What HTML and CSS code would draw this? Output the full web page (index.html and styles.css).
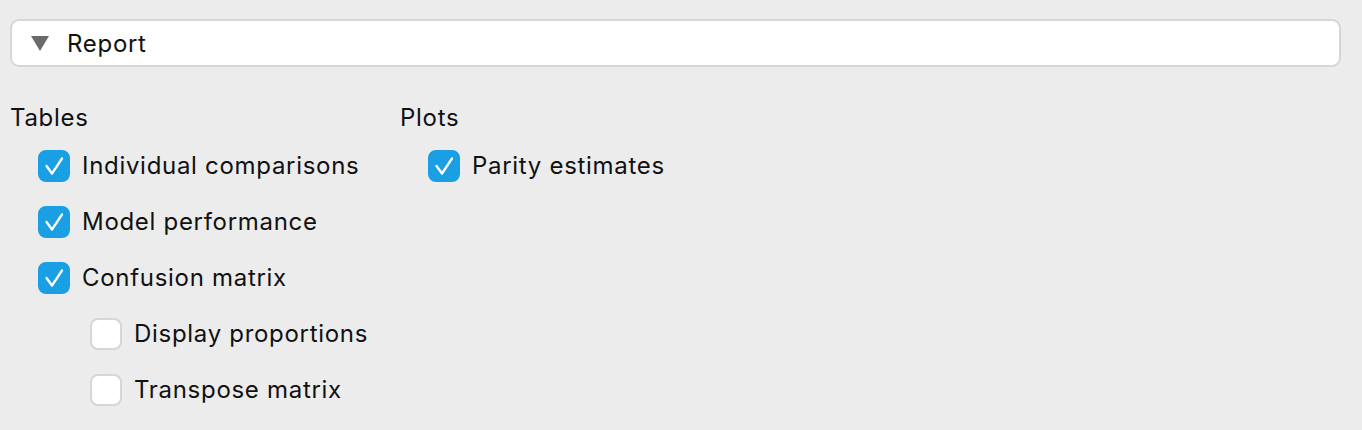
FILE: index.html
```html
<!DOCTYPE html>
<html>
<head>
<meta charset="utf-8">
<link rel="stylesheet" href="styles.css">
</head>
<body>
<div class="page">
  <div class="section-header">
    <span class="tri"></span>
    <span class="section-title">Report</span>
  </div>
  <div class="columns">
    <div class="col col-tables">
      <div class="group-label">Tables</div>
      <div class="opts">
        <label class="opt"><span class="box checked"><svg viewBox="0 0 32 32" width="32" height="32"><path d="M8.5 16 L14 23.5 L24 8.5" fill="none" stroke="#fff" stroke-width="2.3" stroke-linecap="round" stroke-linejoin="round"/></svg></span><span class="txt">Individual comparisons</span></label>
        <label class="opt"><span class="box checked"><svg viewBox="0 0 32 32" width="32" height="32"><path d="M8.5 16 L14 23.5 L24 8.5" fill="none" stroke="#fff" stroke-width="2.3" stroke-linecap="round" stroke-linejoin="round"/></svg></span><span class="txt">Model performance</span></label>
        <label class="opt"><span class="box checked"><svg viewBox="0 0 32 32" width="32" height="32"><path d="M8.5 16 L14 23.5 L24 8.5" fill="none" stroke="#fff" stroke-width="2.3" stroke-linecap="round" stroke-linejoin="round"/></svg></span><span class="txt">Confusion matrix</span></label>
        <div class="sub">
          <label class="opt"><span class="box"></span><span class="txt">Display proportions</span></label>
          <label class="opt"><span class="box"></span><span class="txt">Transpose matrix</span></label>
        </div>
      </div>
    </div>
    <div class="col col-plots">
      <div class="group-label">Plots</div>
      <div class="opts">
        <label class="opt"><span class="box checked"><svg viewBox="0 0 32 32" width="32" height="32"><path d="M8.5 16 L14 23.5 L24 8.5" fill="none" stroke="#fff" stroke-width="2.3" stroke-linecap="round" stroke-linejoin="round"/></svg></span><span class="txt">Parity estimates</span></label>
      </div>
    </div>
  </div>
</div>
</body>
</html>
```
FILE: styles.css
```css
html, body {
  margin: 0;
  padding: 0;
  background: #ececec;
}
body {
  font-family: Inter, "Noto Sans", sans-serif;
  color: #111;
  font-size: 24px;
  letter-spacing: 0.7px;
}
.page {
  padding: 19px 21px 0 10px;
}
.section-header {
  height: 44px;
  border: 2px solid #d6d6d6;
  border-radius: 9px;
  background: #fff;
  display: flex;
  align-items: center;
  padding-left: 19px;
}
.tri {
  width: 0;
  height: 0;
  border-left: 9px solid transparent;
  border-right: 9px solid transparent;
  border-top: 15px solid #6b6b6b;
  margin-right: 18px;
}
.section-title {
  line-height: 1;
  margin-top: 2px;
}
.columns {
  display: flex;
  margin-top: 36px;
}
.col-tables {
  width: 390px;
}
.group-label {
  line-height: 30px;
  height: 30px;
}
.opts {
  padding-left: 28px;
  margin-top: 5px;
}
.opt {
  display: flex;
  align-items: center;
  height: 56px;
}
.box {
  width: 28px;
  height: 28px;
  border: 2px solid #d6d6d6;
  border-radius: 8px;
  background: #fff;
  flex: none;
  margin-right: 12px;
  position: relative;
}
.box.checked {
  background: #1a9fe4;
  border-color: #1a9fe4;
}
.box svg {
  position: absolute;
  left: -2px;
  top: -2px;
}
.txt {
  line-height: 1;
}
.sub {
  padding-left: 52px;
}
```
